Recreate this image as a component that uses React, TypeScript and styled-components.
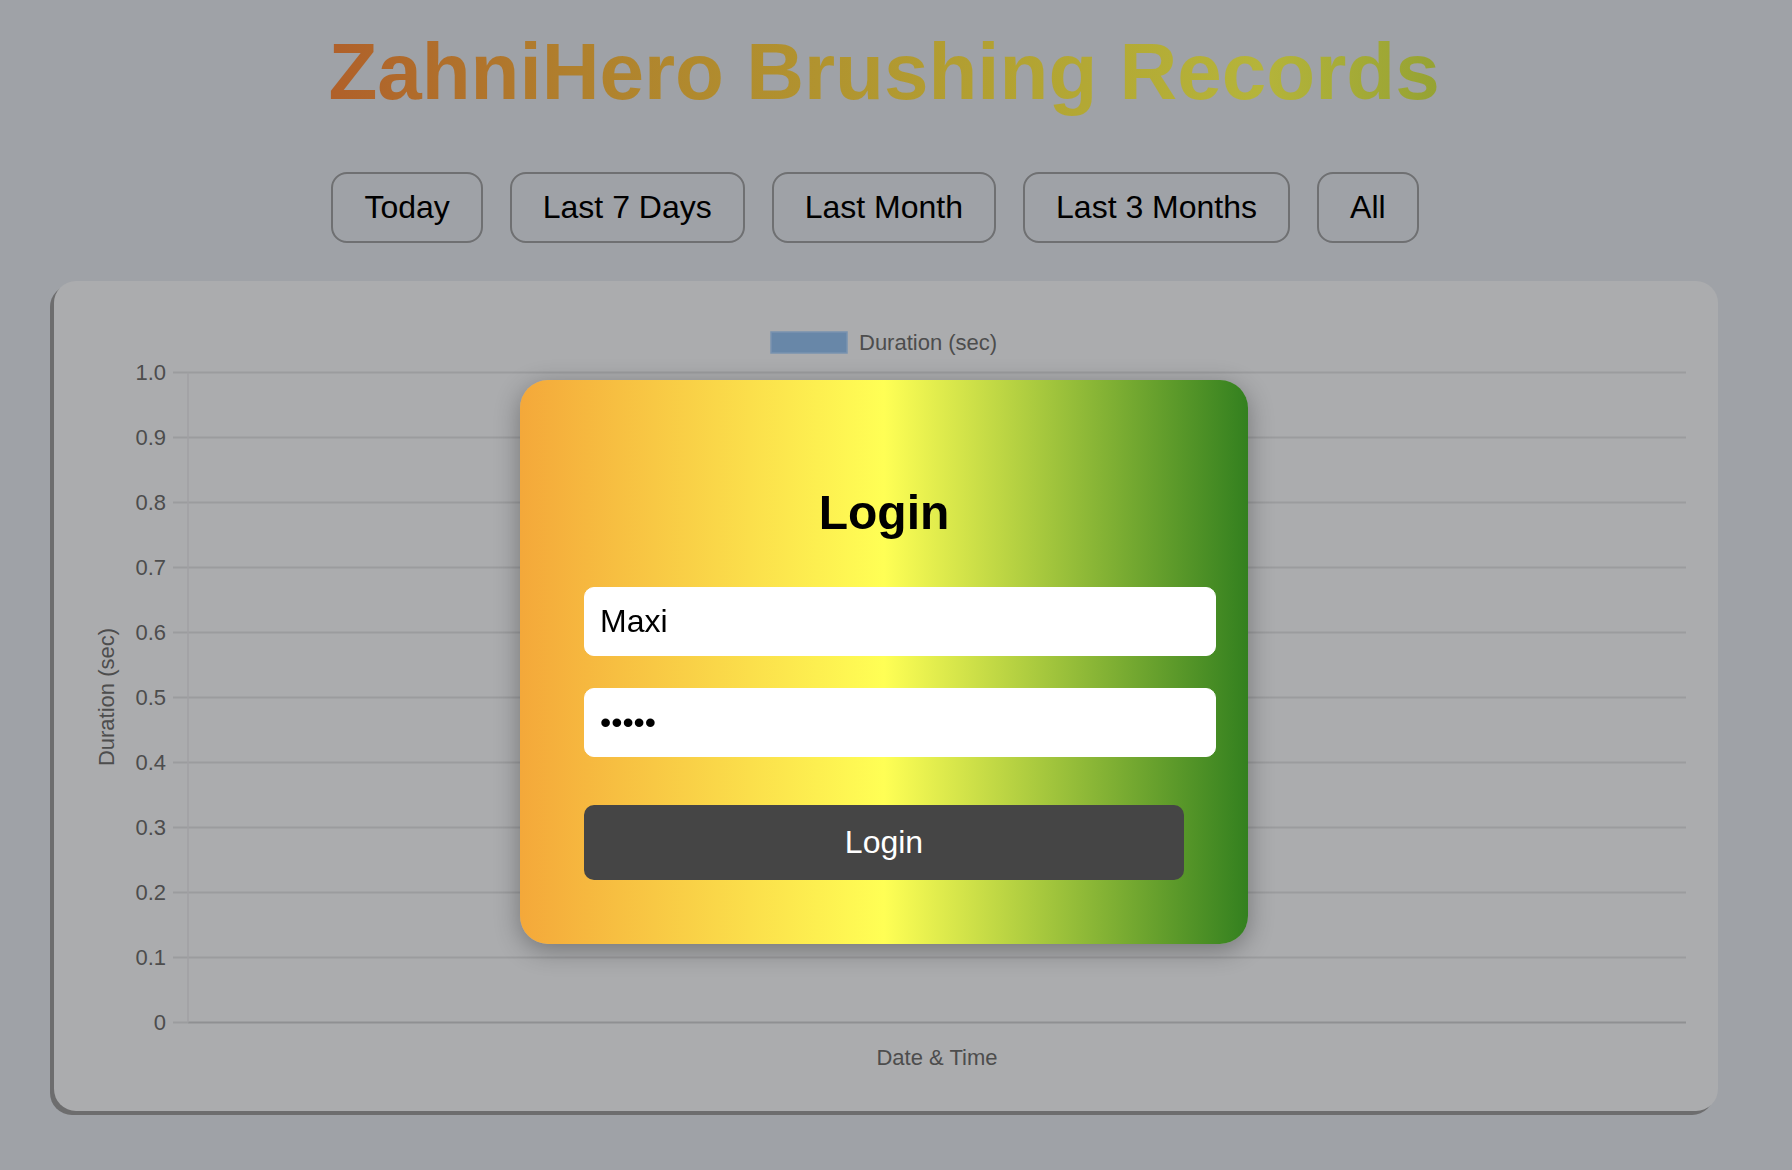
import React from "react";
import styled, { createGlobalStyle } from "styled-components";

const GlobalStyle = createGlobalStyle`
  html, body {
    margin: 0;
    padding: 0;
    background: #9fa2a7;
  }
  body {
    font-family: "Liberation Sans", Arial, Helvetica, sans-serif;
  }
`;

const Page = styled.div`
  padding: 26px 74px 40px 50px;
  box-sizing: border-box;
  min-height: 100vh;
`;

const Header = styled.header`
  display: flex;
  flex-direction: column;
  align-items: center;
`;

const Title = styled.h1`
  margin: 0;
  font-size: 80px;
  line-height: 92px;
  font-weight: 700;
  text-align: center;
`;

const TitleText = styled.span`
  display: inline-block;
  background: linear-gradient(
    to right,
    #b0602a 0%,
    #b0802d 22%,
    #b1942f 45%,
    #b3a834 68%,
    #b5b43a 84%,
    #95a233 100%
  );
  -webkit-background-clip: text;
  background-clip: text;
  color: transparent;
`;

const FilterRow = styled.nav`
  display: flex;
  justify-content: center;
  gap: 27px;
  margin-top: 54px;
  padding-right: 18px;
`;

const FilterButton = styled.button`
  font-family: "Liberation Sans", Arial, Helvetica, sans-serif;
  font-size: 32px;
  line-height: normal;
  color: #000;
  background: transparent;
  border: 2px solid #6f7072;
  border-radius: 16px;
  padding: 15px 31px;
  cursor: pointer;
`;

const ChartCard = styled.section`
  margin: 38px 0 0 4px;
  height: 830px;
  background: #abacae;
  border-radius: 22px;
  box-shadow: -4px 4px 0 #6d6d6e;
  overflow: hidden;
`;

const ChartSvg = styled.svg`
  display: block;
  width: 100%;
  height: 100%;
`;

const ChartText = styled.text<{ $anchor?: string }>`
  font-family: "Liberation Sans", Arial, Helvetica, sans-serif;
  font-size: 22px;
  fill: #4d4d4d;
  text-anchor: ${(p) => p.$anchor || "start"};
`;

const Backdrop = styled.div`
  position: fixed;
  inset: 0;
  display: flex;
  justify-content: center;
  align-items: flex-start;
  padding: 380px 24px 0 0;
`;

const Modal = styled.div`
  width: 600px;
  padding: 64px;
  border-radius: 28px;
  background: linear-gradient(to right, #f4a83a 0%, #ffff55 50%, #33801f 100%);
  box-shadow: 0 6px 26px rgba(0, 0, 0, 0.32);
`;

const ModalTitle = styled.h2`
  margin: 41px 0 47px;
  font-size: 48px;
  line-height: 55px;
  font-weight: 700;
  text-align: center;
  color: #000;
`;

const Form = styled.form`
  display: flex;
  flex-direction: column;
  align-items: flex-start;
`;

const TextInput = styled.input<{ $gapTop?: number }>`
  box-sizing: content-box;
  width: 100%;
  margin: ${(p) => p.$gapTop || 0}px 0 0;
  padding: 15px;
  border: 1px solid #fff;
  border-radius: 10px;
  background: #fff;
  color: #000;
  font-family: "Liberation Sans", Arial, Helvetica, sans-serif;
  font-size: 32px;
  line-height: normal;
  outline: none;
`;

const SubmitButton = styled.button`
  box-sizing: border-box;
  width: 100%;
  margin-top: 48px;
  padding: 19px;
  border: none;
  border-radius: 10px;
  background: #454545;
  color: #fff;
  font-family: "Liberation Sans", Arial, Helvetica, sans-serif;
  font-size: 32px;
  line-height: normal;
  cursor: pointer;
`;

const filters = ["Today", "Last 7 Days", "Last Month", "Last 3 Months", "All"];
const ticks = ["1.0", "0.9", "0.8", "0.7", "0.6", "0.5", "0.4", "0.3", "0.2", "0.1", "0"];

const GRID_TOP = 91.5;
const STEP = 65;
const AXIS_X = 134;
const TICK_X = 119;
const RIGHT_X = 1632;

function Chart() {
  return (
    <ChartSvg viewBox="0 0 1664 830" preserveAspectRatio="none">
      <rect x={717} y={51} width={76} height={21} fill="#6887a8" stroke="#7993b0" strokeWidth={1.5} />
      <ChartText x={805} y={69}>Duration (sec)</ChartText>

      {ticks.map((t, i) => {
        const y = GRID_TOP + STEP * i;
        const isZero = i === ticks.length - 1;
        return (
          <g key={t}>
            <line x1={TICK_X} x2={isZero ? AXIS_X : RIGHT_X} y1={y} y2={y} stroke="#9b9c9e" strokeWidth={2} />
            {isZero && <line x1={AXIS_X} x2={RIGHT_X} y1={y} y2={y} stroke="#8f9092" strokeWidth={2} />}
            <ChartText x={112} y={y + 7.7} $anchor="end">
              {t}
            </ChartText>
          </g>
        );
      })}
      <line x1={AXIS_X} x2={AXIS_X} y1={GRID_TOP} y2={GRID_TOP + STEP * 10} stroke="#a0a1a3" strokeWidth={1.5} />

      <ChartText x={0} y={0} transform="translate(60 416) rotate(-90)" $anchor="middle">
        Duration (sec)
      </ChartText>
      <ChartText x={883} y={784} $anchor="middle">
        Date &amp; Time
      </ChartText>
    </ChartSvg>
  );
}

export default function App() {
  return (
    <>
      <GlobalStyle />
      <Page>
        <Header>
          <Title>
            <TitleText>ZahniHero Brushing Records</TitleText>
          </Title>
        </Header>
        <FilterRow>
          {filters.map((f) => (
            <FilterButton key={f} type="button">
              {f}
            </FilterButton>
          ))}
        </FilterRow>
        <ChartCard>
          <Chart />
        </ChartCard>
      </Page>
      <Backdrop>
        <Modal>
          <ModalTitle>Login</ModalTitle>
          <Form onSubmit={(e) => e.preventDefault()}>
            <TextInput type="text" defaultValue="Maxi" />
            <TextInput type="password" defaultValue="12345" $gapTop={32} />
            <SubmitButton type="submit">Login</SubmitButton>
          </Form>
        </Modal>
      </Backdrop>
    </>
  );
}
